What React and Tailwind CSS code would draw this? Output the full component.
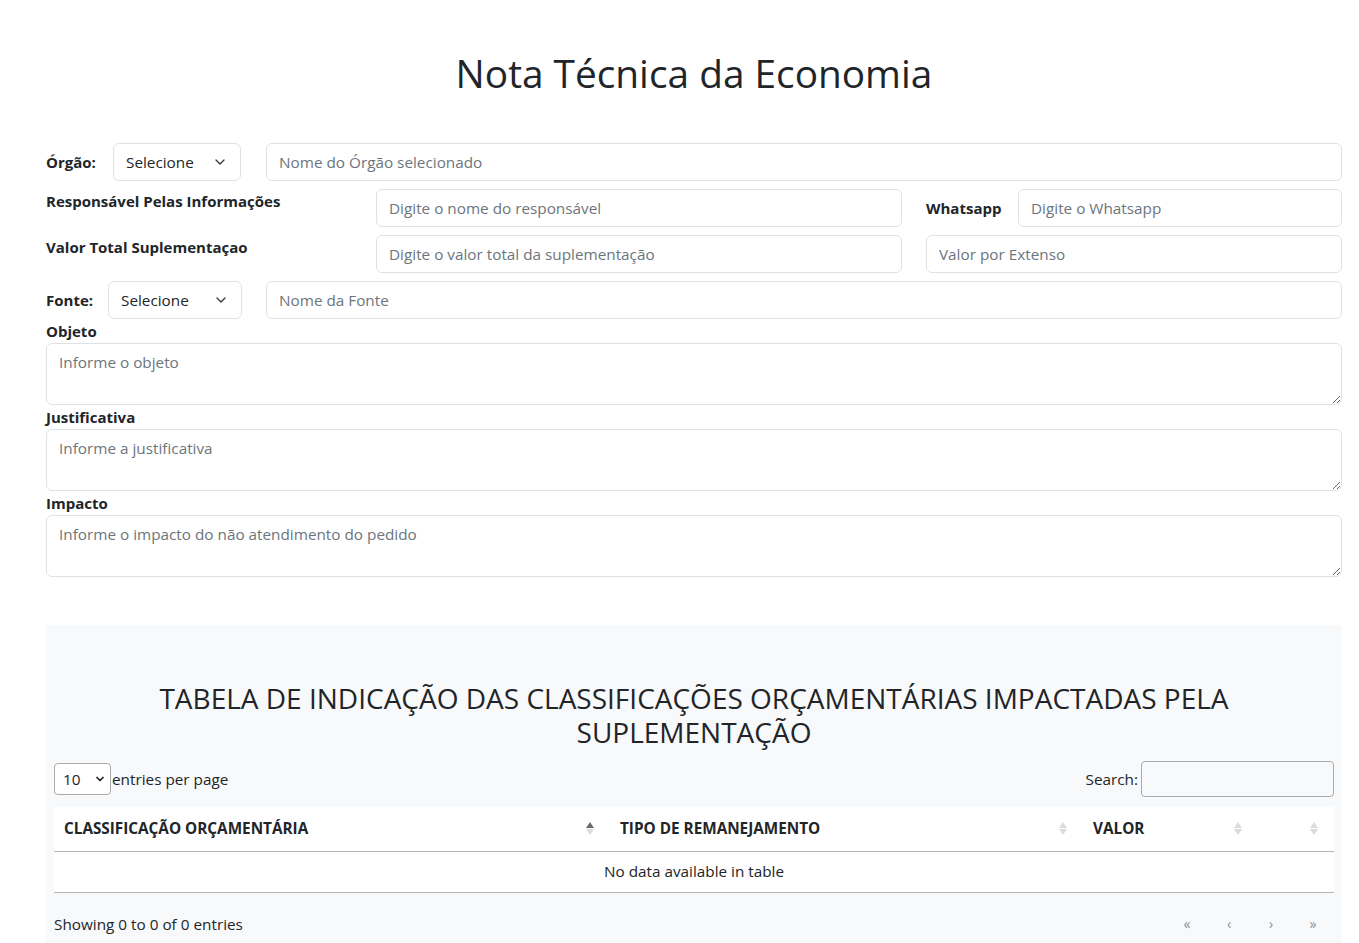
import { ChevronDown } from "lucide-react";

const field =
  "h-[38px] rounded-[6px] border border-[#dee2e6] bg-white px-3 text-[15.3px] text-[#212529] placeholder:text-[#6c757d] outline-none";

function SelectBox({ className = "" }) {
  return (
    <div className={`flex h-[38px] items-center justify-between rounded-[6px] border border-[#dee2e6] bg-white pl-3 pr-3 ${className}`}>
      <span className="text-[15.3px] text-[#212529]">Selecione</span>
      <ChevronDown className="h-4 w-4 text-[#343a40]" strokeWidth={2} />
    </div>
  );
}

function SortIcon({ active = false }) {
  return (
    <span className="flex flex-col items-center gap-[1px]" aria-hidden>
      <svg width="8" height="6" viewBox="0 0 8 6">
        <path d="M4 0 L8 6 L0 6 Z" fill={active ? "#6b6b6b" : "#dcdcdc"} />
      </svg>
      <svg width="8" height="6" viewBox="0 0 8 6">
        <path d="M0 0 L8 0 L4 6 Z" fill="#dcdcdc" />
      </svg>
    </span>
  );
}

function Area({ label, placeholder }) {
  return (
    <div>
      <p className="text-[15px] font-bold leading-[24px] text-[#212529]">{label}</p>
      <textarea
        rows={2}
        placeholder={placeholder}
        className="block h-[62px] w-full rounded-[6px] border border-[#dee2e6] bg-white px-3 py-[6px] text-[15.3px] leading-[24px] text-[#212529] placeholder:text-[#6c757d] outline-none"
      />
    </div>
  );
}

export default function App() {
  return (
    <div className="min-h-screen bg-white pl-[46px] pr-[17px] font-['Open_Sans',sans-serif] text-[#212529]">
      <h1 className="pt-[49px] pb-[46px] text-center text-[38.8px] font-medium leading-[48px]">
        Nota Técnica da Economia
      </h1>

      <div className="flex flex-col gap-2">
        <div className="flex items-center">
          <span className="w-[67px] text-[15px] font-bold">Órgão:</span>
          <SelectBox className="w-[128px]" />
          <input className={`${field} ml-[25px] flex-1`} placeholder="Nome do Órgão selecionado" />
        </div>

        <div className="flex items-start">
          <span className="w-[330px] pt-[2px] text-[15px] font-bold leading-[20px]">Responsável Pelas Informações</span>
          <input className={`${field} w-[526px]`} placeholder="Digite o nome do responsável" />
          <span className="ml-[24px] w-[92px] self-center text-[15px] font-bold">Whatsapp</span>
          <input className={`${field} flex-1`} placeholder="Digite o Whatsapp" />
        </div>

        <div className="flex items-start">
          <span className="w-[330px] pt-[2px] text-[15px] font-bold leading-[20px]">Valor Total Suplementaçao</span>
          <input className={`${field} w-[526px]`} placeholder="Digite o valor total da suplementação" />
          <input className={`${field} ml-[24px] flex-1`} placeholder="Valor por Extenso" />
        </div>

        <div className="flex items-center">
          <span className="w-[62px] text-[15px] font-bold">Fonte:</span>
          <SelectBox className="w-[134px]" />
          <input className={`${field} ml-[24px] flex-1`} placeholder="Nome da Fonte" />
        </div>
      </div>

      <div className="flex flex-col">
        <Area label="Objeto" placeholder="Informe o objeto" />
        <Area label="Justificativa" placeholder="Informe a justificativa" />
        <Area label="Impacto" placeholder="Informe o impacto do não atendimento do pedido" />
      </div>

      <section className="mt-[48px] bg-[#f8f9fa] px-2 pt-[56px] pb-4">
        <h3 className="mx-auto max-w-[1100px] text-center text-[28px] font-medium uppercase leading-[34px]">
          Tabela de indicação das classificações orçamentárias impactadas pela suplementação
        </h3>

        <div className="mt-[12px] flex items-center justify-between">
          <div className="flex items-center text-[15.3px]">
            <div className="flex h-[32px] w-[57px] items-center justify-between rounded-[4px] border border-[#aaa] bg-white pl-2 pr-1">
              <span>10</span>
              <ChevronDown className="h-3 w-3" strokeWidth={3.5} />
            </div>
            <span className="ml-[1px]">entries per page</span>
          </div>
          <div className="flex items-center text-[15.3px]">
            <span className="mr-[3px]">Search:</span>
            <input className="h-[36px] w-[193px] rounded-[4px] border border-[#aaa] bg-transparent outline-none" />
          </div>
        </div>

        <table className="mt-[10px] w-full border-collapse bg-white text-[15.3px]">
          <thead>
            <tr className="h-[44px] border-b border-[#b5b5b5] text-left font-bold">
              <th className="w-[556px] pl-[10px] pr-[16px]">
                <div className="flex items-center justify-between">
                  <span>CLASSIFICAÇÃO ORÇAMENTÁRIA</span>
                  <SortIcon active />
                </div>
              </th>
              <th className="w-[473px] pl-[10px] pr-[16px]">
                <div className="flex items-center justify-between">
                  <span>TIPO DE REMANEJAMENTO</span>
                  <SortIcon />
                </div>
              </th>
              <th className="w-[175px] pl-[10px] pr-[16px]">
                <div className="flex items-center justify-between">
                  <span>VALOR</span>
                  <SortIcon />
                </div>
              </th>
              <th className="pl-[10px] pr-[16px]">
                <div className="flex items-center justify-end">
                  <SortIcon />
                </div>
              </th>
            </tr>
          </thead>
          <tbody>
            <tr className="h-[41px] border-b border-[#b5b5b5]">
              <td colSpan={4} className="text-center">No data available in table</td>
            </tr>
          </tbody>
        </table>

        <div className="mt-[20px] flex items-center justify-between">
          <span className="text-[15.3px]">Showing 0 to 0 of 0 entries</span>
          <div className="flex items-center text-[14px] text-[#8a8f99]">
            {["«", "‹", "›", "»"].map((c) => (
              <span key={c} className="w-[42px] text-center">{c}</span>
            ))}
          </div>
        </div>
      </section>
    </div>
  );
}
